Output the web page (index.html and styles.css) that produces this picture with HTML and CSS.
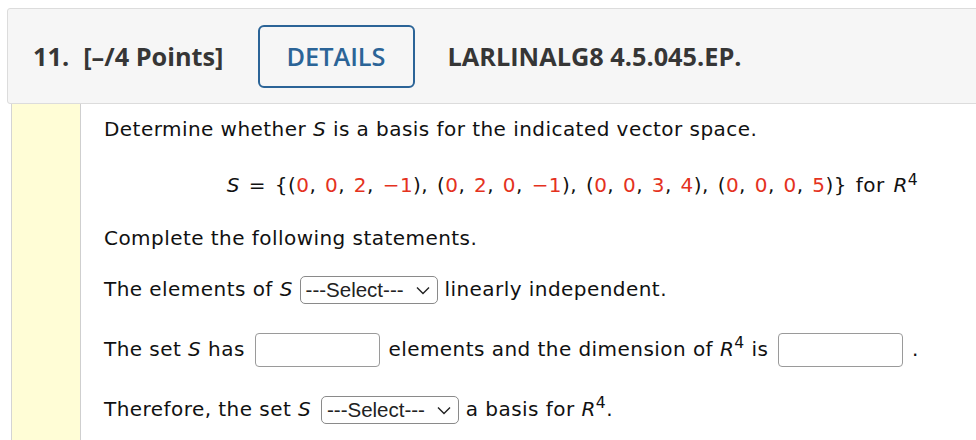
FILE: index.html
```html
<!DOCTYPE html>
<html>
<head>
<meta charset="utf-8">
<link rel="stylesheet" href="styles.css">
</head>
<body>
<div class="page">
  <div class="header">
    <span class="qnum">11.</span>
    <span class="pts">[–/4 Points]</span>
    <button class="details">DETAILS</button>
    <span class="ref">LARLINALG8 4.5.045.EP.</span>
  </div>
  <div class="main">
    <div class="gutter"></div>
    <div class="content">
      <p class="p1">Determine whether <i>S</i> is a basis for the indicated vector space.</p>
      <p class="p2 center"><i>S</i> = {(<span class="r">0</span>, <span class="r">0</span>, <span class="r">2</span>, <span class="r">−1</span>), (<span class="r">0</span>, <span class="r">2</span>, <span class="r">0</span>, <span class="r">−1</span>), (<span class="r">0</span>, <span class="r">0</span>, <span class="r">3</span>, <span class="r">4</span>), (<span class="r">0</span>, <span class="r">0</span>, <span class="r">0</span>, <span class="r">5</span>)} for <i>R</i><sup>4</sup></p>
      <p class="p3">Complete the following statements.</p>
      <p class="p4">The elements of <i>S</i> <span class="select"><span class="sel-text">---Select---</span><svg class="chev" width="14" height="9" viewBox="0 0 14 9"><path d="M1 1.5 L7 7.5 L13 1.5" fill="none" stroke="#222" stroke-width="1.4"/></svg></span> linearly independent.</p>
      <p class="p5">The set <i>S</i> has <input class="box" type="text"> elements and the dimension of <i>R</i><sup>4</sup> is <input class="box" type="text"> .</p>
      <p class="p6">Therefore, the set <i>S</i> <span class="select sel2"><span class="sel-text">---Select---</span><svg class="chev" width="14" height="9" viewBox="0 0 14 9"><path d="M1 1.5 L7 7.5 L13 1.5" fill="none" stroke="#222" stroke-width="1.4"/></svg></span> a basis for <i>R</i><sup>4</sup>.</p>
    </div>
  </div>
</div>
</body>
</html>
```

FILE: styles.css
```css
html, body {
  margin: 0;
  padding: 0;
  background: #ffffff;
  overflow: hidden;
}

.page {
  width: 1100px;
  padding: 8px 0 0 7px;
}

.header {
  display: flex;
  align-items: center;
  height: 94px;
  border: 1px solid #dcdcdc;
  border-radius: 3px;
  background: #f6f6f6;
  padding-left: 25px;
  font-family: "Open Sans", "Noto Sans", sans-serif;
  font-weight: 700;
  font-size: 25.3px;
  color: #363636;
}

.qnum {
  margin-right: 14px;
}

.details {
  margin-left: 34px;
  margin-right: 33px;
  width: 157px;
  height: 63px;
  border: 2px solid #2b6497;
  border-radius: 6px;
  background: transparent;
  color: #2b6497;
  font-family: "Open Sans", "Noto Sans", sans-serif;
  font-weight: 600;
  font-size: 25.3px;
  padding: 0;
}

.main {
  display: flex;
  height: 340px;
}

.gutter {
  margin-left: 4px;
  width: 68px;
  border-left: 1px solid #d4d4d4;
  border-right: 1px solid #cfcfcf;
  background: #fffdd6;
}

.content {
  width: 937px;
  padding-left: 23px;
  padding-top: 14px;
  font-family: "DejaVu Sans", Verdana, sans-serif;
  font-size: 20px;
  letter-spacing: 0.45px;
  color: #111;
  line-height: 22px;
}

.content p {
  margin: 0;
}

.center {
  text-align: center;
  word-spacing: 2px;
}

.r {
  color: #e4321e;
}

sup {
  font-size: 0.78em;
  line-height: 0;
  vertical-align: 0.45em;
}

.p2 { margin-top: 34px !important; }
.p3 { margin-top: 31px !important; }
.p4 { margin-top: 27px !important; }
.p5 { margin-top: 29px !important; }
.p6 { margin-top: 29px !important; }

.select {
  display: inline-flex;
  align-items: center;
  justify-content: space-between;
  box-sizing: border-box;
  width: 138px;
  height: 28px;
  border: 1px solid #8a8a8a;
  border-radius: 5px;
  background: #fff;
  padding: 0 7px 0 5px;
  vertical-align: middle;
  font-family: "Liberation Sans", Arial, sans-serif;
  font-size: 20.5px;
  letter-spacing: 0;
  color: #222;
}

.sel2 {
  margin-left: 3px;
}

.box {
  box-sizing: border-box;
  width: 125px;
  height: 34px;
  border: 1px solid #9a9a9a;
  border-radius: 4px;
  background: #fff;
  vertical-align: middle;
  margin: 0 2px 0 3px;
  padding: 0;
}
```
